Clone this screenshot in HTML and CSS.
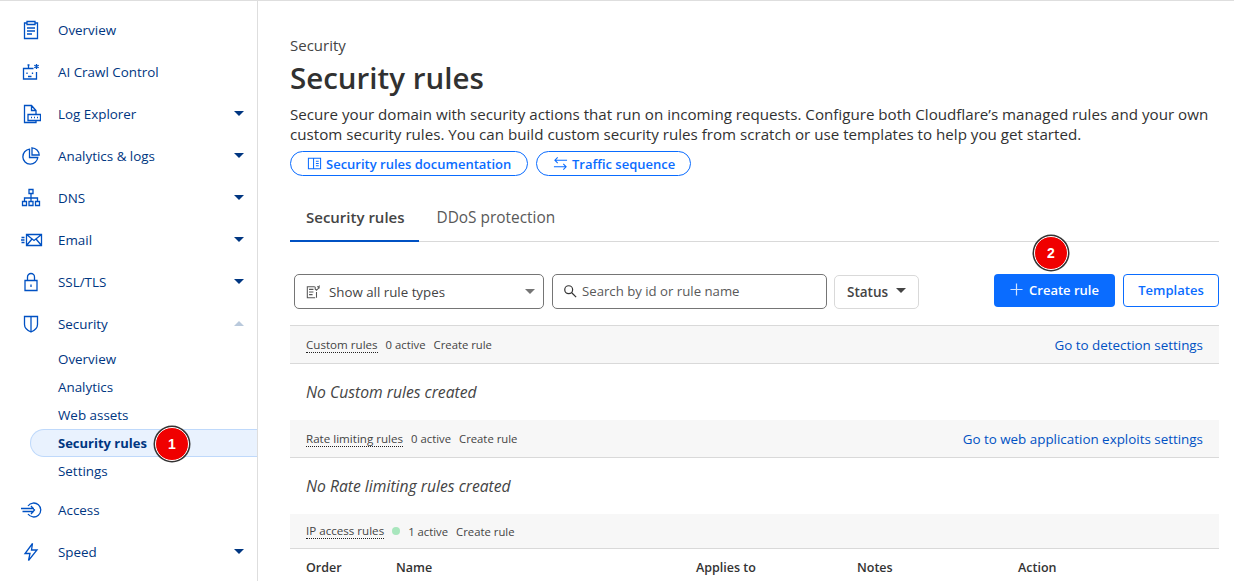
FILE: index.html
```html
<!DOCTYPE html>
<html lang="en">
<head>
<meta charset="utf-8">
<title>Security rules</title>
<link rel="stylesheet" href="styles.css">
</head>
<body>
<div class="page">
<nav class="sidebar">
  <a class="nav-item"><svg class="nav-icon" viewBox="0 0 20 20"><path d="M6 3H3.500v15.500h13V3H14M6 1.500h8v3H6zM6 8h8M6 11h8M6 14h5"/></svg><span class="nav-label">Overview</span></a>
  <a class="nav-item"><svg class="nav-icon" viewBox="0 0 20 20"><path d="M12.500 6.500H2.500v10.500h13v-7M7.500 6.500V3.500M6.500 3h2M6 10.500V12M11.500 10.500V12M7 14.500h3.500M15.500 2v5M13.300 3.200l4.400 2.600M17.700 3.200l-4.400 2.600"/></svg><span class="nav-label">AI Crawl Control</span></a>
  <a class="nav-item"><svg class="nav-icon" viewBox="0 0 20 20"><path d="M15 10V6.500L10.500 1.500H3.500v17H15v-2M10.500 1.500v5H15M7 10.500h12.500v6H7zM10 13.500h1M13 13.500h1M16 13.500h1"/></svg><span class="nav-label">Log Explorer</span><i class="caret"></i></a>
  <a class="nav-item"><svg class="nav-icon" viewBox="0 0 20 20"><path d="M8.500 3.200a7.500 7.500 0 1 0 8.300 8.300H8.500zM11 1.800v7.200h7.200A7.500 7.500 0 0 0 11 1.800z"/></svg><span class="nav-label">Analytics &amp; logs</span><i class="caret"></i></a>
  <a class="nav-item"><svg class="nav-icon" viewBox="0 0 20 20"><path d="M8 1.500h4v4H8zM10 5.500v8M3.500 13v-3h13v3M1.500 13.500h4v4h-4zM8 13.500h4v4H8zM14.500 13.500h4v4h-4z"/></svg><span class="nav-label">DNS</span><i class="caret"></i></a>
  <a class="nav-item"><svg class="nav-icon nav-icon-wide" viewBox="0 0 22 20"><path d="M5.500 4.500h15v11h-15zM5.500 4.500l7.500 6 7.500-6M5.500 15.500l5.500-6.500M20.500 15.500L15 9M.5 7.500h3M0 10h3.500M.5 12.500h3"/></svg><span class="nav-label">Email</span><i class="caret"></i></a>
  <a class="nav-item"><svg class="nav-icon" viewBox="0 0 20 20"><path d="M4 8.500h12v10H4zM6.500 8.500V5a3.500 3.500 0 0 1 7 0v3.500M10 12.500v2.500"/></svg><span class="nav-label">SSL/TLS</span><i class="caret"></i></a>
  <div class="nav-group">
    <a class="nav-item"><svg class="nav-icon" viewBox="0 0 20 20"><path d="M3.500 2.500h13v8c0 3.500-3 6-6.500 7.500-3.500-1.500-6.500-4-6.500-7.500zM10 2.500V18"/></svg><span class="nav-label">Security</span><i class="caret caret-up"></i></a>
    <div class="sub-list">
      <a class="sub-item">Overview</a>
      <a class="sub-item">Analytics</a>
      <a class="sub-item">Web assets</a>
      <a class="sub-item sub-item-active">Security rules<span class="badge badge-one">1</span></a>
      <a class="sub-item">Settings</a>
    </div>
  </div>
  <a class="nav-item"><svg class="nav-icon nav-icon-wide" viewBox="0 0 22 20"><path d="M7 6a7 7 0 1 1 0 8M0 8.500h13M1.500 11.500h11.500M10 6l3.500 4-3.500 4"/></svg><span class="nav-label">Access</span></a>
  <a class="nav-item"><svg class="nav-icon" viewBox="0 0 20 20"><path d="M11.500 1.500L4 11.500h5L7.500 18.500l8.500-10.500h-5.500z"/></svg><span class="nav-label">Speed</span><i class="caret"></i></a>
</nav>
<main class="main">
  <div class="eyebrow">Security</div>
  <h1 class="title">Security rules</h1>
  <p class="intro">Secure your domain with security actions that run on incoming requests. Configure both Cloudflare’s managed rules and your own custom security rules. You can build custom security rules from scratch or use templates to help you get started.</p>
  <div class="pills">
    <a class="pill pill-doc"><svg class="pill-icon" viewBox="0 0 16 16"><path d="M1.500 2.500h5.500v11H1.500zM7 2.500h7.500v11H7zM9.500 5.500h3M9.500 8h3M9.500 10.500h3"/></svg>Security rules documentation</a>
    <a class="pill pill-seq"><svg class="pill-icon" viewBox="0 0 16 16"><path d="M15 4.500H2M5 1.500l-3 3 3 3M1 11.500h13M11 8.500l3 3-3 3"/></svg>Traffic sequence</a>
  </div>
  <div class="tabs">
    <a class="tab tab-active">Security rules</a>
    <a class="tab tab-plain">DDoS protection</a>
  </div>
  <div class="toolbar">
    <div class="select">
      <svg class="select-icon" viewBox="0 0 16 16"><path d="M10 2H1.500v12.500h9M3.500 5h5M3.500 8h5M3.500 11h4M12 8v6.500M10.500 2v2.500l1.500 1.500 1.500-1.500 1.500-1v-2l-1 1-1-1"/></svg>
      <span class="select-label">Show all rule types</span>
      <i class="caret caret-gray"></i>
    </div>
    <div class="search">
      <svg class="search-icon" viewBox="0 0 16 16"><circle cx="6.500" cy="6.500" r="4.500"/><path d="M10 10l5 5"/></svg>
      <span class="search-text">Search by id or rule name</span>
    </div>
    <div class="status">Status<i class="caret caret-dark"></i></div>
    <div class="actions">
      <a class="btn btn-primary"><svg class="plus" viewBox="0 0 14 14"><path d="M7 .5v13M.5 7h13"/></svg>Create rule<span class="badge badge-two">2</span></a>
      <a class="btn btn-outline">Templates</a>
    </div>
  </div>
  <section class="rules">
    <div class="rule-head">
      <span class="rule-name">Custom rules</span><span class="rule-meta">0 active</span><a class="rule-meta">Create rule</a>
      <a class="rule-link">Go to detection settings</a>
    </div>
    <div class="rule-empty">No Custom rules created</div>
    <div class="rule-head">
      <span class="rule-name">Rate limiting rules</span><span class="rule-meta">0 active</span><a class="rule-meta">Create rule</a>
      <a class="rule-link">Go to web application exploits settings</a>
    </div>
    <div class="rule-empty">No Rate limiting rules created</div>
    <div class="rule-head rule-head-short">
      <span class="rule-name">IP access rules</span><i class="dot"></i><span class="rule-meta">1 active</span><a class="rule-meta">Create rule</a>
    </div>
    <div class="cols">
      <span class="col col-order">Order</span>
      <span class="col col-name">Name</span>
      <span class="col col-applies">Applies to</span>
      <span class="col col-notes">Notes</span>
      <span class="col col-action">Action</span>
    </div>
  </section>
</main>
</div>
</body>
</html>
```
FILE: styles.css
```css
* { box-sizing: border-box; }
html, body { margin: 0; height: 581px; overflow: hidden; background: #fff; }
body { font-family: "Open Sans", "Noto Sans", sans-serif; color: #313131; }
a { text-decoration: none; color: inherit; }
.page { display: flex; height: 581px; border-top: 1px solid #dedede; }

.sidebar { width: 258px; flex: none; border-right: 1px solid #dedede; padding-top: 8px; color: #003681; }
.nav-item { display: flex; align-items: center; height: 42px; padding-left: 21px; padding-right: 13px; font-size: 13.400px; }
.nav-icon { width: 20px; height: 20px; flex: none; fill: none; stroke: #0051c3; stroke-width: 1.300; }
.nav-icon-wide { width: 22px; }
.nav-label { margin-left: 17px; flex: 1; }
.nav-icon-wide + .nav-label { margin-left: 15px; }
.caret { width: 0; height: 0; border-left: 5px solid transparent; border-right: 5px solid transparent; border-top: 5px solid #003681; flex: none; margin-top: -1px; }
.caret-up { border-top: 0; border-bottom: 5px solid #b9c9dc; }
.sub-list { display: flex; flex-direction: column; margin-left: 30px; padding-bottom: 4px; }
.sub-item { height: 28px; display: flex; align-items: center; padding-left: 28px; font-size: 13.400px; position: relative; }
.sub-item-active { font-weight: 700; font-size: 13px; background: #e9f2fe; border: 1px solid #bfd9fb; border-right: 0; border-radius: 14px 0 0 14px; padding-left: 27px; }
.badge { position: absolute; width: 34px; height: 34px; border-radius: 50%; background: #f00000; border: 1px solid #fff; box-shadow: 0 0 0 1.500px #333; color: #fff; font: 700 14px "Liberation Sans", sans-serif; display: flex; align-items: center; justify-content: center; }
.badge-one { left: 124px; top: -3px; }
.badge-two { left: 40px; top: -38px; }

.main { flex: 1; min-width: 0; padding: 35px 15px 0 32px; }
.eyebrow { font-size: 15px; line-height: 18px; font-weight: 500; color: #444; }
.title { margin: 5px 0 0; font-size: 29.500px; line-height: 38px; font-weight: 600; color: #313131; }
.intro { margin: 7px 0 0; font-size: 15.150px; line-height: 20px; color: #313131; }
.pills { display: flex; gap: 8px; margin-top: 7px; }
.pill { display: flex; align-items: center; height: 25px; padding-left: 16px; border: 1px solid #0a6cff; border-radius: 13px; color: #0a6cff; font-size: 13px; font-weight: 600; }
.pill-doc { width: 238px; }
.pill-seq { width: 155px; }
.pill-icon { width: 15px; height: 15px; margin-right: 4px; fill: none; stroke: #0a6cff; stroke-width: 1.100; }
.tabs { display: flex; margin-top: 17px; border-bottom: 1px solid #d9d9d9; height: 49px; }
.tab { display: flex; align-items: center; padding: 0 16px; font-size: 15.200px; color: #595959; }
.tab-plain { padding-left: 18px; font-size: 15.400px; }
.tab-active { font-weight: 600; font-size: 15px; color: #444; border-bottom: 2px solid #0051c3; height: 49px; padding-right: 14px; }

.toolbar { display: flex; align-items: center; margin-top: 32px; padding-left: 4px; height: 35px; }
.select { width: 250px; height: 35px; border: 1px solid #757575; border-radius: 5px; display: flex; align-items: center; padding: 0 8px 0 11px; font-size: 13.300px; color: #444; }
.select-icon { width: 14px; height: 14px; fill: none; stroke: #555; stroke-width: 1.200; flex: none; }
.select-label { flex: 1; margin-left: 9px; }
.caret-gray { border-top-color: #757575; }
.search { width: 275px; margin-left: 8px; height: 35px; border: 1px solid #757575; border-radius: 5px; display: flex; align-items: center; padding-left: 10px; font-size: 13.200px; color: #595959; padding-bottom: 2px; }
.search-icon { width: 14px; height: 14px; fill: none; stroke: #333; stroke-width: 1.400; flex: none; margin-right: 5px; }
.search-text { white-space: nowrap; }
.status { width: 85px; margin-left: 7px; height: 34px; border: 1px solid #d9d9d9; border-radius: 5px; display: flex; align-items: center; justify-content: center; gap: 8px; font-size: 13.500px; font-weight: 600; color: #444; }
.caret-dark { border-top-color: #444; margin: -2px 0 0; }
.actions { margin-left: auto; display: flex; gap: 8px; margin-top: -2px; }
.btn { height: 33px; display: flex; align-items: center; justify-content: center; padding-bottom: 2px; border-radius: 4px; font-size: 13px; font-weight: 600; position: relative; }
.btn-primary { width: 121px; background: #0a6cff; color: #fff; }
.plus { width: 13px; height: 13px; stroke: #cfe2ff; stroke-width: 1.300; fill: none; margin-right: 6px; }
.btn-outline { width: 96px; border: 1px solid #0a6cff; color: #0a6cff; }

.rules { margin-top: 16px; }
.rule-head { display: flex; align-items: center; height: 39px; background: #f7f7f7; border-top: 1px solid #d9d9d9; border-bottom: 1px solid #d9d9d9; padding: 0 16px; font-size: 11.300px; color: #444; }
.rule-empty + .rule-head { border-top: 0; height: 38px; }
.rule-head-short { height: 35px !important; }
.rule-name { border-bottom: 1px dotted #222; margin-right: 8px; color: #444; font-size: 11.600px; font-weight: 500; line-height: 15px; }
.rule-meta { margin-right: 8px; }
.rule-link { margin-left: auto; color: #0051c3; font-size: 13.400px; }
.dot { width: 8px; height: 8px; border-radius: 50%; background: #a8e6bd; margin-right: 8px; }
.rule-empty { height: 56px; padding-left: 16px; display: flex; align-items: center; font-size: 15.700px; font-style: italic; color: #444; }
.cols { display: flex; align-items: center; height: 33px; padding-top: 4px; border-bottom: 1px solid #d9d9d9; font-size: 12.500px; font-weight: 600; color: #333; padding-left: 16px; }
.col { flex: none; }
.col-order { width: 90px; }
.col-name { width: 300px; }
.col-applies { width: 161px; }
.col-notes { width: 161px; }
```
